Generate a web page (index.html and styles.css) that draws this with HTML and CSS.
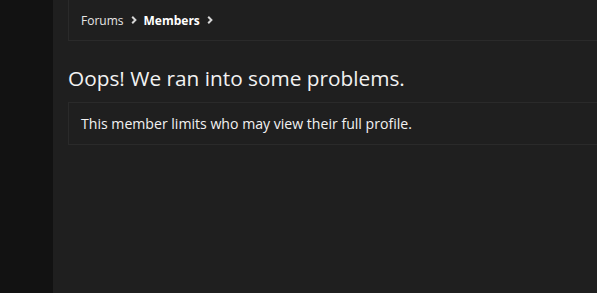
FILE: index.html
```html
<!DOCTYPE html>
<html>
<head>
<meta charset="utf-8">
<link rel="stylesheet" href="styles.css">
</head>
<body>
<div class="page">
  <aside class="sidebar"></aside>
  <main class="main">
    <nav class="crumbs">
      <span class="crumb">Forums</span>
      <svg class="chev" viewBox="0 0 6 8" width="6" height="8"><path d="M1.2 0.8 L4.4 4 L1.2 7.2" fill="none" stroke="#d6d6d6" stroke-width="2"/></svg>
      <span class="crumb current">Members</span>
      <svg class="chev" viewBox="0 0 6 8" width="6" height="8"><path d="M1.2 0.8 L4.4 4 L1.2 7.2" fill="none" stroke="#d6d6d6" stroke-width="2"/></svg>
    </nav>
    <h1 class="title">Oops! We ran into some problems.</h1>
    <div class="notice">This member limits who may view their full profile.</div>
  </main>
</div>
</body>
</html>
```
FILE: styles.css
```css
html, body {
  margin: 0;
  padding: 0;
  background: #1f1f1f;
  height: 100%;
  overflow: hidden;
}
body {
  font-family: "Open Sans", "Noto Sans", sans-serif;
  color: #f2f2f2;
}
.page {
  display: flex;
  height: 293px;
}
.sidebar {
  width: 53px;
  flex: none;
  background: #121212;
}
.main {
  flex: 1;
  padding-left: 15px;
  min-width: 0;
}
.crumbs {
  display: flex;
  align-items: center;
  gap: 7px;
  height: 41px;
  padding: 0 0 0 12px;
  border-left: 1px solid #2a2a2a;
  border-bottom: 1px solid #2a2a2a;
  box-sizing: border-box;
  font-size: 12px;
}
.crumb { color: #e6e6e6; }
.crumb.current { font-weight: 700; color: #fff; }
.title {
  margin: 22px 0 9px;
  font-size: 20.8px;
  font-weight: 400;
  line-height: 30px;
  color: #f2f2f2;
}
.notice {
  border: 1px solid #2a2a2a;
  border-right: none;
  height: 43px;
  box-sizing: border-box;
  padding: 0 12px;
  display: flex;
  align-items: center;
  font-size: 14.1px;
}
```
